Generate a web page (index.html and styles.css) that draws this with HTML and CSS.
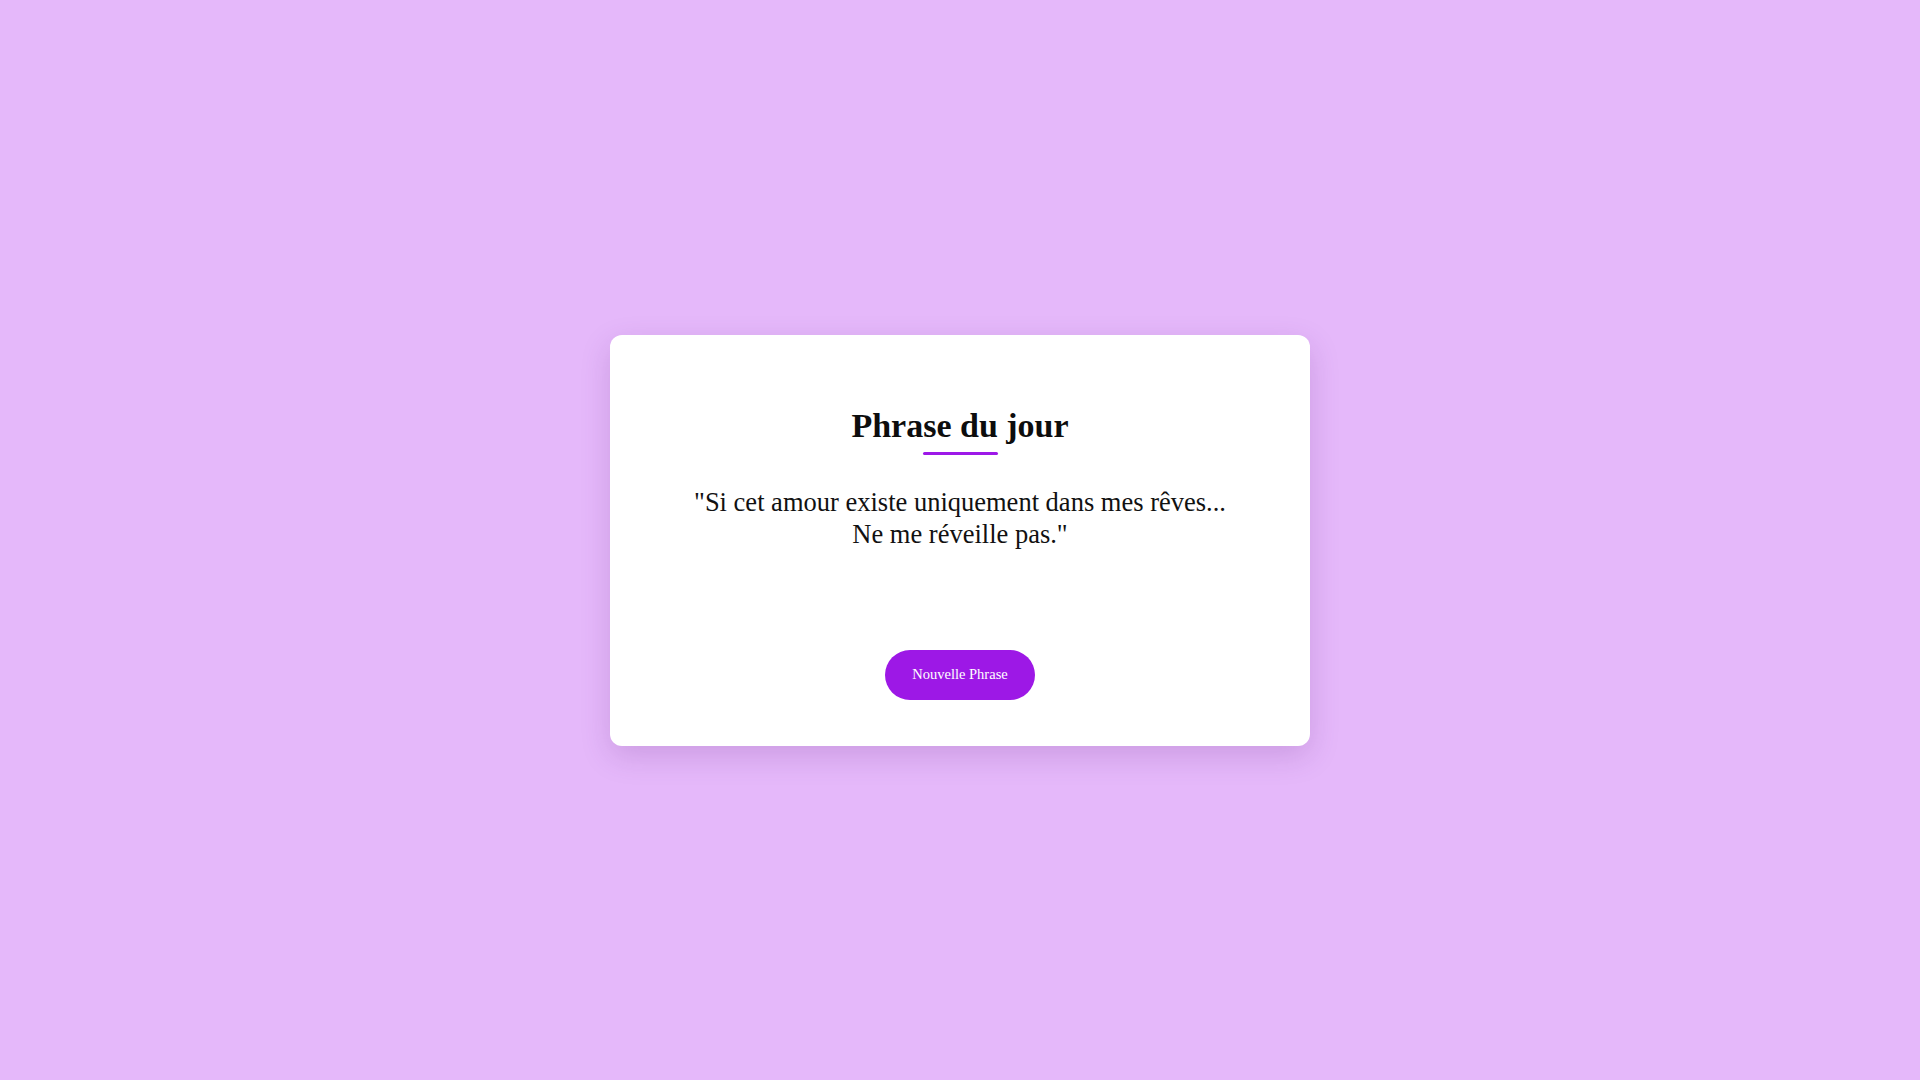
FILE: index.html
```html
<!DOCTYPE html>
<html lang="fr">
<head>
<meta charset="utf-8">
<title>Phrase du jour</title>
<link rel="stylesheet" href="styles.css">
</head>
<body>
<main class="card">
  <h1 class="title">Phrase du jour</h1>
  <div class="rule"></div>
  <p class="quote">"Si cet amour existe uniquement dans mes rêves...<br>Ne me réveille pas."</p>
  <button class="btn" type="button">Nouvelle Phrase</button>
</main>
</body>
</html>
```
FILE: styles.css
```css
* { box-sizing: border-box; }
html, body { margin: 0; padding: 0; }
body {
  min-height: 100vh;
  background: #e5b8fa;
  display: flex;
  align-items: center;
  justify-content: center;
  font-family: "Liberation Serif", "DejaVu Serif", serif;
  color: #111;
}
.card {
  width: 700px;
  background: #fff;
  border-radius: 12px;
  padding: 71px 40px 46px;
  display: flex;
  flex-direction: column;
  align-items: center;
  text-align: center;
  box-shadow: 0 10px 30px rgba(90, 30, 120, 0.18);
}
.title {
  margin: 0;
  font-size: 34px;
  line-height: 40px;
  font-weight: 700;
  color: #0d0d0d;
}
.rule {
  width: 75px;
  height: 3px;
  margin-top: 6px;
  background: #9d18e8;
  border-radius: 2px;
}
.quote {
  margin: 31px 0 0;
  font-size: 26.5px;
  line-height: 32px;
  color: #111;
}
.btn {
  margin-top: 100px;
  width: 150px;
  height: 50px;
  border: none;
  border-radius: 25px;
  background: #9d18e6;
  color: #fff;
  font-family: "Liberation Serif", "DejaVu Serif", serif;
  font-size: 14.5px;
  cursor: pointer;
}
```
